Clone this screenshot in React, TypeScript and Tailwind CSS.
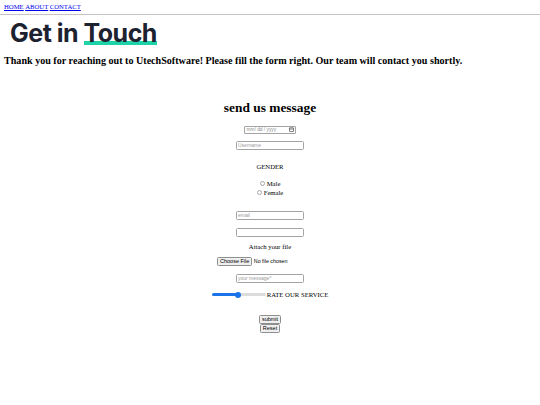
import React from 'react';

const serif = { fontFamily: '"Liberation Serif", "Times New Roman", serif' };
const sans = { fontFamily: '"Liberation Sans", Arial, sans-serif' };

const inputCls =
  'block w-[68px] h-[9px] border border-[#a3a3a3] rounded-[1.5px] px-[1px] text-[5px] leading-[7px] text-black placeholder:text-[#9a9a9a] bg-white outline-none';

const btnCls =
  'block border border-[#8f8f8f] bg-[#efefef] rounded-[1.5px] px-[2px] h-[9px] text-[5.5px] leading-[7px] text-black';

const App: React.FC = () => {
  return (
    <div className="w-[540px] h-[405px] bg-white text-black overflow-hidden" style={serif}>
      <nav className="px-[4px] pt-[2px] text-[6.7px] leading-[9px] flex gap-[1.5px]">
        <a href="#" className="text-[#0000ee] underline">HOME</a>
        <a href="#" className="text-[#0000ee] underline">ABOUT</a>
        <a href="#" className="text-[#0000ee] underline">CONTACT</a>
      </nav>
      <hr className="mt-[3px] border-t border-[#c4c4c4]" />

      <h1
        className="ml-[10px] mt-[4px] text-[25px] leading-[28px] font-bold text-[#1d2230] tracking-[-0.5px]"
        style={{ fontFamily: 'Inter, "Liberation Sans", sans-serif' }}
      >
        Get in{' '}
        <span className="relative inline-block">
          <span className="absolute left-0 right-0 top-[22px] h-[3.5px] bg-[#1fd2a8]" />
          <span className="relative">Touch</span>
        </span>
      </h1>

      <p className="ml-[4px] mt-[8px] text-[10.1px] leading-[12px] font-bold">
        Thank you for reaching out to UtechSoftware! Please fill the form right. Our team will contact you shortly.
      </p>

      <form className="mt-[33px] flex flex-col items-center text-center">
        <h2 className="text-[13.4px] leading-[16px] font-bold">send us message</h2>

        <div
          className="mt-[9.5px] w-[52px] h-[8px] border border-[#a3a3a3] rounded-[1px] flex items-center justify-between px-[1.5px] text-[4.8px] text-[#8a8a8a]"
          style={sans}
        >
          <span>mm/ dd / yyyy</span>
          <svg width="5" height="5" viewBox="0 0 10 10" fill="none" stroke="#333" strokeWidth="1.2">
            <rect x="1" y="1.5" width="8" height="7.5" rx="0.5" />
            <line x1="1" y1="4" x2="9" y2="4" />
          </svg>
        </div>
        <input type="text" placeholder="Username" className={`${inputCls} mt-[7px]`} style={sans} />

        <div className="mt-[13.5px] text-[6.7px] leading-[8px]">GENDER</div>
        <label className="mt-[8px] flex items-center gap-[2px] text-[6.7px] leading-[9px]">
          <input
            type="radio"
            name="g"
            className="appearance-none w-[5px] h-[5px] m-0 rounded-full border border-[#a8a8a8] bg-white"
          />
          Male
        </label>
        <label className="flex items-center gap-[2px] text-[6.7px] leading-[9px]">
          <input
            type="radio"
            name="g"
            className="appearance-none w-[5px] h-[5px] m-0 rounded-full border border-[#a8a8a8] bg-white"
          />
          Female
        </label>

        <input type="email" placeholder="email" className={`${inputCls} mt-[13.5px]`} style={sans} />
        <input type="text" className={`${inputCls} mt-[8px]`} style={sans} />

        <div className="mt-[6.5px] text-[6.7px] leading-[8px]">Attach your file</div>
        <div className="mt-[5.5px] w-[106px] h-[10px] flex items-center gap-[1.5px] text-[5.3px]" style={sans}>
          <span className={btnCls}>Choose File</span>
          <span>No file chosen</span>
        </div>

        <input type="text" placeholder="your message*" className={`${inputCls} mt-[7px]`} style={sans} />

        <div className="mt-[8px] h-[8px] flex items-center">
          <div className="relative w-[54px] h-[6px] flex items-center">
            <div className="w-[26px] h-[2.5px] rounded-l-full bg-[#1a73e8]" />
            <div className="flex-1 h-[2.5px] rounded-r-full bg-[#dcdcdc]" />
            <div className="absolute left-[23px] top-0 w-[6px] h-[6px] rounded-full bg-[#1a73e8]" />
          </div>
          <span className="text-[6.7px] leading-[8px] ml-[1px]">RATE OUR SERVICE</span>
        </div>

        <button type="button" className={`${btnCls} mt-[16px]`} style={sans}>
          submit
        </button>
        <button type="button" className={btnCls} style={sans}>
          Reset
        </button>
      </form>
    </div>
  );
};

export default App;
